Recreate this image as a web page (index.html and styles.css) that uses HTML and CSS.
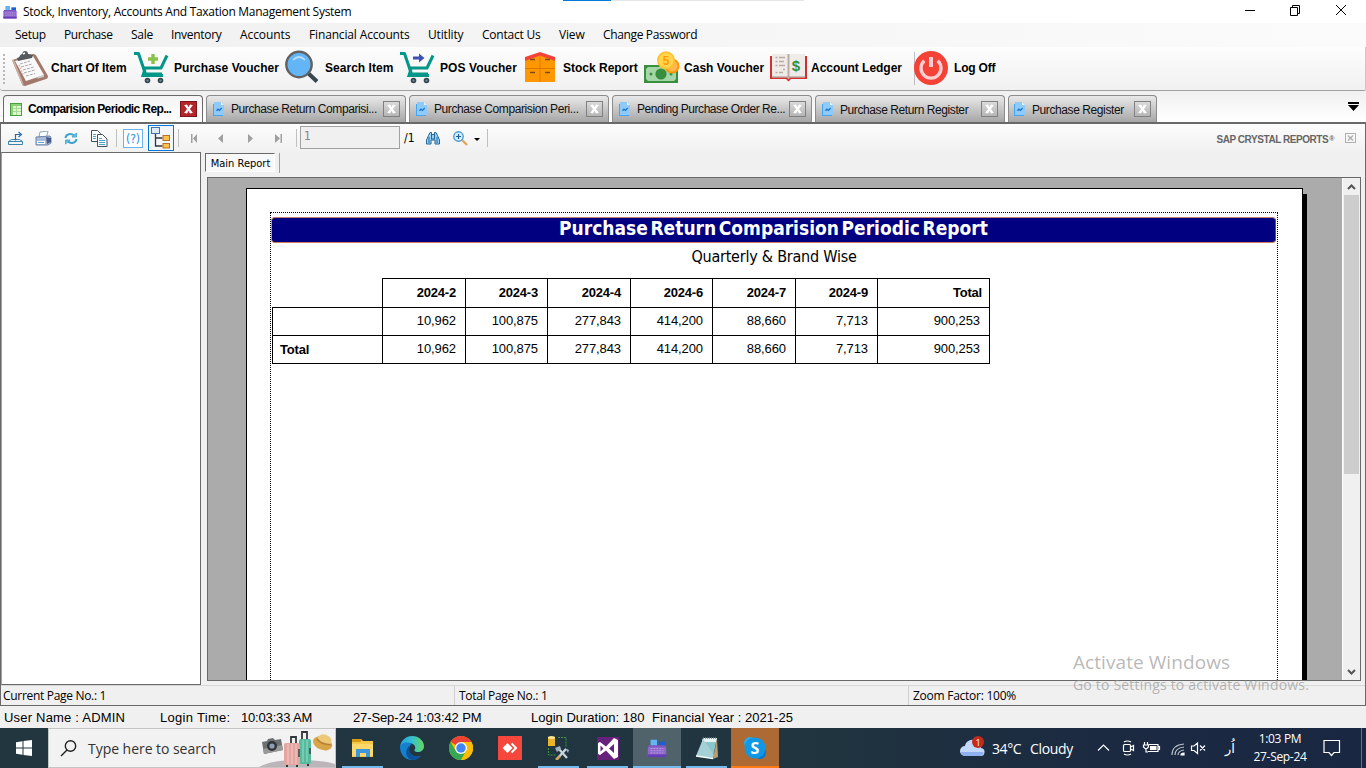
FILE: index.html
```html
<!DOCTYPE html>
<html lang="en">
<head>
<meta charset="utf-8">
<title>Stock, Inventory, Accounts And Taxation Management System</title>
<link rel="stylesheet" href="styles.css">
</head>
<body>
<svg class="defs" aria-hidden="true">
  <symbol id="app" viewBox="0 0 24 24">
    <path d="M5 3h7v7H5z" fill="#64b5f6"/><path d="M14 5h7v4h-7z" fill="#1a5fd8"/>
    <path d="M3 9h18l1 3H2z" fill="#7e57c2"/><rect x="2" y="11" width="20" height="10" fill="#9166cf"/>
    <path d="M2 19h20v3H2z" fill="#673ab7"/><path d="M5 12.500h14M5 15h14M5 17.500h14" stroke="#b39ddb" stroke-width="1.100" stroke-dasharray="2 1.200"/>
  </symbol>
  <symbol id="cart" viewBox="0 0 36 34">
    <path d="M1 2.500h4.500l7 20.500h16.500" fill="none" stroke="#009688" stroke-width="3" stroke-linejoin="round"/>
    <path d="M9.500 17h18.500l6-12.500" fill="none" stroke="#009688" stroke-width="3"/>
    <path d="M12 18l-2 6.500h20" fill="none" stroke="#009688" stroke-width="3"/>
    <circle cx="14.500" cy="29.500" r="2.800" fill="#37474f"/><circle cx="27.500" cy="29.500" r="2.800" fill="#37474f"/>
    <circle cx="14.500" cy="29.500" r="1.100" fill="#78909c"/><circle cx="27.500" cy="29.500" r="1.100" fill="#78909c"/>
  </symbol>
  <symbol id="doc" viewBox="0 0 12 14">
    <path d="M1 0h7l3 3v10H1z" fill="#90caf9"/><path d="M8 0v3h3z" fill="#e3f2fd"/><path d="M0 2h1v11h9v1H0z" fill="#42a5f5"/>
    <path d="M3.500 8.800l1.500-1.600 1.500 1.200 2.200-2.400" fill="none" stroke="#1976d2" stroke-width="1.300"/>
  </symbol>
  <symbol id="x" viewBox="0 0 17 16">
    <rect x=".5" y=".5" width="16" height="15" fill="none" stroke="currentColor"/>
    <path d="M5.500 4l6 8M11.500 4l-6 8" stroke="#fff" stroke-width="2.200"/><path d="M4.500 4.500h3M9.500 4.500h3M4.500 11.500h3M9.500 11.500h3" stroke="#fff"/>
  </symbol>
</svg>

<header class="titlebar">
  <svg class="app-icon" width="16" height="16"><use href="#app"/></svg>
  <span class="window-title">Stock, Inventory, Accounts And Taxation Management System</span>
  <i class="top-progress"></i>
  <svg class="win-buttons" width="112" height="20" viewBox="0 0 112 20" fill="none" stroke="#000">
    <path d="M5 8.500h10"/><path d="M50.500 5.500h7v8h-7zM52.500 5.500v-2h7v8h-2"/><path d="M96 3l10 10M106 3l-10 10"/>
  </svg>
</header>

<nav class="menu">
  <span>Setup</span><span>Purchase</span><span>Sale</span><span>Inventory</span><span>Accounts</span><span>Financial Accounts</span><span>Utitlity</span><span>Contact Us</span><span>View</span><span>Change Password</span>
</nav>

<div class="toolbar">
  <i class="grip"></i>
  <div class="tool t-chart"><svg width="38" height="38" viewBox="0 0 38 38">
    <path d="M1 11L22 5c2 0 3 1 4 3l11 19c0 2-1 3-2 3L14 37c-2 0-3-1-3-2z" fill="#a1786a"/>
    <path d="M1 11l10 24 2 2-2-6L3 11z" fill="#c9b3a6"/>
    <path d="M4 12l18-5 11 19-18 6z" fill="#fafafa"/><path d="M33 26l-7 2 1 1-2 1 8-2z" fill="#ccc"/>
    <path d="M9 15l10-3M10 18l11-3M12 21l11-3M13 24l11-3M15 27l9-2.500" stroke="#aaa" stroke-width="1" stroke-dasharray="3 1"/>
    <path d="M8 16l5 11" stroke="#ef9a94" stroke-width="1.200" stroke-dasharray="1.500 1.500"/>
    <path d="M6 9c3 0 2-3 5-4 1-2 1-3 3-3s3 1 3 3c3 0 3 1 5 1l-1 3-14 3z" fill="#555a5d"/><path d="M12 5l2-1" stroke="#fff" stroke-width="1.500"/>
  </svg><b>Chart Of Item</b></div>
  <div class="tool t-purchase"><svg width="36" height="34"><use href="#cart"/><path d="M20 3v10M15 8h10" stroke="#8bc34a" stroke-width="3.400"/></svg><b>Purchase Voucher</b></div>
  <div class="tool t-search"><svg width="35" height="35" viewBox="0 0 35 35"><path d="M23 23l9 8.500" stroke="#37474f" stroke-width="4"/><circle cx="14" cy="14.500" r="12.700" fill="#64b5f6" stroke="#616161" stroke-width="2.400"/><path d="M8 10q6-6 12 0" fill="none" stroke="#bbdefb" stroke-width="1.700"/></svg><b>Search Item</b></div>
  <div class="tool t-pos"><svg width="36" height="34"><use href="#cart"/><path d="M14 7h7" stroke="#3f51b5" stroke-width="3"/><path d="M20 2.500l5.500 4.500-5.500 4.500z" fill="#3f51b5"/></svg><b>POS Voucher</b></div>
  <div class="tool t-stock"><svg width="31" height="31" viewBox="0 0 31 31"><path d="M0 6L15 1l15 5v24H0z" fill="#ff9800"/><path d="M0 9V5L15 0l15 5v4L15 3.500z" fill="#f44336"/><path d="M15 4v26M0 16.500h30" stroke="#e07800"/><path d="M5 7.500h5M20 7.500h5M5 20.500h5M20 20.500h5" stroke="#7a4a20" stroke-width="1.300"/></svg><b>Stock Report</b></div>
  <div class="tool t-cash"><svg width="36" height="33" viewBox="0 0 36 33"><path d="M0 14h34v18H0z" fill="#388e3c"/><path d="M4 16h26l2 2v10l-2 2H4l-2-2V18z" fill="#a5d6a7"/><circle cx="17" cy="23" r="5.600" fill="#388e3c"/><circle cx="7" cy="23" r="1.500" fill="#388e3c"/><circle cx="27" cy="23" r="1.500" fill="#388e3c"/><circle cx="28" cy="15" r="7.500" fill="#ff9800"/><circle cx="28" cy="15" r="5.500" fill="#ffb74d"/><circle cx="22" cy="9.300" r="9" fill="#fdc02f"/><circle cx="22" cy="9.300" r="7.400" fill="#ffd54f"/><text x="22" y="14" class="coin">5</text></svg><b>Cash Voucher</b></div>
  <div class="tool t-ledger"><svg width="37" height="28" viewBox="0 0 37 28"><path d="M0 2h37v23H21l-2.500 2.500L16 25H0z" fill="#d32f2f"/><path d="M2 0h16.500v23H2zM18.500 0H35v23H18.500z" fill="#efebe9"/><path d="M2 23h16l.5 2 .5-2h16" fill="none" stroke="#bcaaa4" stroke-width="1.500"/><path d="M18.500 0v24" stroke="#bcaaa4" stroke-width="2"/><path d="M5.500 3.500h2M9 3.500h6M5.500 7.500h2M9 7.500h5M5.500 11.500h2M9 11.500h6M13 15.500h2M5.500 18.500h2M9 18.500h4" stroke="#bcaaa4" stroke-width="1.300"/><text x="26" y="16.500" class="dollar">$</text></svg><b>Account Ledger</b></div>
  <i class="tool-sep"></i>
  <div class="tool t-logoff"><svg width="34" height="34" viewBox="0 0 34 34"><circle cx="17" cy="17" r="17" fill="#f44336"/><path d="M10.300 9.700a10 10 0 1 0 13.400 0" fill="none" stroke="#ffcdd2" stroke-width="3.400"/><path d="M17 6v10" stroke="#ffcdd2" stroke-width="4"/></svg><b>Log Off</b></div>
</div>

<div class="tabs">
  <div class="tab active w-a"><svg class="sheet" width="12" height="13" viewBox="0 0 12 13"><rect x=".5" y=".5" width="11" height="12" fill="#dff5d0" stroke="#4a9e3d"/><path d="M1 1h10v2H1zM1 1h2v11H1z" fill="#8ed07a"/><path d="M3 5.500h8M3 8.500h8M6.500 3v9" stroke="#a6db95"/></svg><span>Comparision Periodic Rep...</span><svg class="close" width="17" height="16"><use href="#x"/></svg></div>
  <div class="tab w-b"><svg width="12" height="14"><use href="#doc"/></svg><span>Purchase Return Comparisi...</span><svg class="close" width="17" height="16"><use href="#x"/></svg></div>
  <div class="tab w-c"><svg width="12" height="14"><use href="#doc"/></svg><span>Purchase Comparision Peri...</span><svg class="close" width="17" height="16"><use href="#x"/></svg></div>
  <div class="tab w-d"><svg width="12" height="14"><use href="#doc"/></svg><span>Pending Purchase Order Re...</span><svg class="close" width="17" height="16"><use href="#x"/></svg></div>
  <div class="tab low w-e"><svg width="12" height="14"><use href="#doc"/></svg><span>Purchase Return Register</span><svg class="close" width="17" height="16"><use href="#x"/></svg></div>
  <div class="tab low w-f"><svg width="12" height="14"><use href="#doc"/></svg><span>Purchase Register</span><svg class="close" width="17" height="16"><use href="#x"/></svg></div>
  <svg class="tab-list" width="11" height="9" viewBox="0 0 11 9"><path d="M0 0h11v2H0zM0 3h11L5.500 9z"/></svg>
</div>

<main class="viewer">
  <div class="viewer-bar">
    <svg class="i-export" width="18" height="16" viewBox="0 0 18 16" fill="none" stroke="#3d83ae"><path d="M1.500 11.500l3-2h8l3 2v3h-14zM1.500 11.500h14"/><path d="M8.500 10.500v-6h5" stroke="#2d6aa3" stroke-width="1.200"/><path d="M11.500 2l3 2.500-3 2.500" stroke="#2d6aa3" stroke-width="1.200"/></svg>
    <svg class="i-print" width="17" height="15" viewBox="0 0 17 15"><path d="M5 1l8-1-1.500 6H4z" fill="#fff" stroke="#8fa6bd"/><path d="M1 6l14-1 1 2v5l-3 2H1z" fill="#a9bbd6" stroke="#7086ab"/><path d="M11 6l5 1v4l-4 2z" fill="#465c8e"/><path d="M2 10h8v3H2z" fill="#fff"/><path d="M3 11.500h6" stroke="#5da0d8"/></svg>
    <svg class="i-refresh" width="14" height="13" viewBox="0 0 14 13" fill="none" stroke="#3fa1cf" stroke-width="2"><path d="M1.500 6C2 2 7 1 10 3.500M12.500 7C12 11 7 12 4 9.500"/><path d="M12.500 1v4H8zM1.500 12V8H6z" fill="#68c3e5" stroke-width=".8"/></svg>
    <svg class="i-copy" width="17" height="17" viewBox="0 0 17 17" fill="#fff" stroke="#42505c"><path d="M.5.500h6l3 3v8h-9z"/><path d="M6.500 4.500h5l4.500 4.500v7.500H6.500z"/><path d="M2 4.500h3M2 6.500h3M2 8.500h3M8 8.500h3M8 10.500h6M8 12.500h6M8 14.500h6" stroke="#4aa3c9"/></svg>
    <i class="sep s1"></i>
    <svg class="i-help" width="20" height="19" viewBox="0 0 20 19"><rect x=".5" y=".5" width="19" height="18" fill="#fff" stroke="#6db4ee"/><text x="10" y="14" class="help">(?)</text></svg>
    <span class="tree-toggle"><svg width="20" height="22" viewBox="0 0 20 22"><path d="M4.500 7v12h7M4.500 11h7" fill="none" stroke="#33373b" stroke-width="1.300"/><rect x=".5" y=".5" width="8" height="6" fill="#dfeaf8" stroke="#486fae"/><rect x="12" y="8.500" width="6.500" height="5" fill="#ffc14a" stroke="#b9702a"/><rect x="12" y="16.500" width="6.500" height="4.500" fill="#ffc14a" stroke="#b9702a"/></svg></span>
    <i class="sep s2"></i>
    <svg class="i-nav" width="94" height="9" viewBox="0 0 94 9" fill="#a0a0a0"><path d="M0 0h1.500v9H0zM6 0v9L2 4.500zM32 0v9l-5-4.500zM57 0v9l5-4.500zM84 0v9l5-4.500zM89.500 0H91v9h-1.500z"/></svg>
    <i class="sep s3"></i>
    <span class="page-input">1</span>
    <span class="page-count">/1</span>
    <svg class="i-find" width="14" height="14" viewBox="0 0 14 14" fill="#9ad0ef" stroke="#23699b"><path d="M2.500 4.500l1.500-3 1.500 0v2h3v-2h1.500l1.500 3 2 4.500v4h-4.500v-4h-4v4H.5v-4z"/><path d="M5.500 3v5h3V3M3 6v6M11 6v6" fill="none"/></svg>
    <svg class="i-zoom" width="15" height="15" viewBox="0 0 15 15"><path d="M9 9l5 5" stroke="#e2a456" stroke-width="2.300"/><circle cx="5.500" cy="5.500" r="4.700" fill="#d6efff" stroke="#4b9ad2" stroke-width="1.400"/><path d="M5.500 3v5M3 5.500h5" stroke="#1d5f9d" stroke-width="1.200"/></svg>
    <svg class="i-drop" width="6" height="3" viewBox="0 0 6 3"><path d="M0 0h6L3 3z"/></svg>
    <i class="sep s4"></i>
    <span class="brand">SAP CRYSTAL REPORTS<sup>®</sup></span>
    <svg class="i-close" width="11" height="10" viewBox="0 0 11 10" fill="none" stroke="#b0b0b0"><rect x=".5" y=".5" width="10" height="9"/><path d="M3 2.500l5 5M8 2.500l-5 5" stroke-width="1.500"/></svg>
  </div>
  <div class="viewer-body">
    <aside class="tree"></aside>
    <section class="report">
      <div class="report-tabs"><span class="main-tab">Main Report</span><i></i></div>
      <div class="canvas">
        <div class="paper-zone"><div class="paper"><div class="margins">
          <h1 class="banner">Purchase Return Comparision Periodic Report</h1>
          <p class="subtitle">Quarterly &amp; Brand Wise</p>
          <div class="crosstab">
            <span class="blank"></span><b>2024-2</b><b>2024-3</b><b>2024-4</b><b>2024-6</b><b>2024-7</b><b>2024-9</b><b class="end">Total</b>
            <span></span><span>10,962</span><span>100,875</span><span>277,843</span><span>414,200</span><span>88,660</span><span>7,713</span><span class="end">900,253</span>
            <b class="row-head last">Total</b><span class="last">10,962</span><span class="last">100,875</span><span class="last">277,843</span><span class="last">414,200</span><span class="last">88,660</span><span class="last">7,713</span><span class="end last">900,253</span>
          </div>
        </div></div></div>
        <div class="scrollbar">
          <svg width="9" height="6" viewBox="0 0 9 6"><path d="M1 5l3.500-3.500L8 5" /></svg>
          <i class="thumb"></i>
          <svg width="9" height="6" viewBox="0 0 9 6"><path d="M1 1l3.500 3.500L8 1"/></svg>
        </div>
      </div>
    </section>
  </div>
  <footer class="viewer-status"><span>Current Page No.: 1</span><span>Total Page No.: 1</span><span>Zoom Factor: 100%</span></footer>
</main>

<footer class="login"><span class="l1">User Name : ADMIN</span><span class="l2">Login Time:</span><span class="l3">10:03:33 AM</span><span class="l4">27-Sep-24 1:03:42 PM</span><span class="l5">Login Duration: 180</span><span class="l6">Financial Year : 2021-25</span></footer>

<div class="taskbar">
  <div class="start"><svg width="16" height="16" viewBox="0 0 16 16" fill="#fff"><path d="M0 2.200L6.500 1.300V7.500H0zM7.500 1.100L16 0v7.500H7.500zM0 8.500h6.500v6.200L0 13.800zM7.500 8.500H16V16l-8.500-1.100z"/></svg></div>
  <div class="search">
    <svg width="17" height="17" viewBox="0 0 17 17" fill="none" stroke="#222" stroke-width="1.400"><circle cx="10.500" cy="6" r="5.200"/><path d="M7 10L1 16"/></svg>
    <span>Type here to search</span>
    <svg class="travel" width="76" height="38" viewBox="0 0 76 38">
      <path d="M0 38q10-6 34-7 30 0 42 4v3z" fill="#bbb4b8"/>
      <path d="M3 13l5-1 1-2 5-1 2 2 6-1 2 11-19 4z" fill="#6d7072"/><path d="M4 20l19-4 1 5-19 4z" fill="#999"/><circle cx="13" cy="17" r="5" fill="#303336"/><circle cx="13" cy="17" r="2.600" fill="#8da0b3"/>
      <path d="M43 12V3h5v9M32 15V8h5v8" fill="none" stroke="#34373b" stroke-width="1.800"/>
      <rect x="40" y="10" width="12" height="25" rx="2" fill="#58b99d"/><path d="M44 11v22M48 11v22" stroke="#8fe1c8"/>
      <rect x="25" y="14" width="16" height="22" rx="2" fill="#e4a4a0"/><path d="M29 15v20M33 15v20M37 15v20" stroke="#f6ccc7"/><path d="M51 19v6M40 20v8" stroke="#3c4648" stroke-width="1.500"/>
      <path d="M27 37h2M37 37h2M48 36h2" stroke="#333" stroke-width="2"/>
      <g transform="rotate(22 63 13)"><ellipse cx="64" cy="14" rx="10" ry="6.500" fill="#d8a548"/><path d="M57 12q1-8 8-7 7 0 7 7-7 4-15 0z" fill="#edc878"/><path d="M57 12q7 4 15 0" fill="none" stroke="#b67d35" stroke-width="1.600"/></g>
    </svg>
  </div>
  <div class="apps">
    <div class="task run"><svg width="24" height="24" viewBox="0 0 24 24"><path d="M1 3h9l2 2h10v16H1z" fill="#f7c948"/><path d="M1 3h9v3H1z" fill="#d99b17"/><path d="M1 8h21v12H1z" fill="#ffd86b"/><path d="M5 21v-8h14v8h-4v-4H9v4z" fill="#3c96dc"/></svg></div>
    <div class="task"><svg width="24" height="24" viewBox="0 0 24 24"><defs><linearGradient id="eg" x1="0" x2="1"><stop offset="0" stop-color="#2b9fe0"/><stop offset=".5" stop-color="#35c1d1"/><stop offset="1" stop-color="#66d85a"/></linearGradient></defs><path d="M0 11C1 4 6 0 12 0c7 0 12 5 12 10 0 4-3 6-6 6-4 0-4-2-3-3 1-2-1-6-6-6-4 0-7 2-9 4z" fill="url(#eg)"/><path d="M0 11c0 7 5 13 12 13 4 0 7-2 9-4-6 2-12-1-12-7 0-3 2-5 3-5-5-3-11-1-12 3z" fill="#1380d0"/><path d="M9 13c0 6 6 9 12 7-2 3-6 4-9 4-6-1-8-9-3-14z" fill="#0c5299"/></svg></div>
    <div class="task"><svg width="24" height="24" viewBox="0 0 24 24"><circle cx="12" cy="12" r="12" fill="#fbbc05"/><path d="M12 12L1.600 6A12 12 0 0 1 22.400 6z" fill="#ea4335"/><path d="M1.600 6A12 12 0 0 0 12 24l5.200-9H6.800z" fill="#34a853"/><path d="M22.400 6H12l5.200 9L12 24A12 12 0 0 0 22.400 6z" fill="#fbbc05"/><circle cx="12" cy="12" r="6" fill="#fff"/><circle cx="12" cy="12" r="4.700" fill="#4285f4"/></svg></div>
    <div class="task"><svg width="24" height="24" viewBox="0 0 24 24"><path d="M0 0h24v24H0z" fill="#f5473b"/><path d="M4.500 12l5-5 5 5-5 5z" fill="#fff"/><path d="M13.500 7.500l4.500 4.500-4.500 4.500" fill="none" stroke="#fff" stroke-width="2"/></svg></div>
    <div class="task run"><svg width="24" height="24" viewBox="0 0 24 24"><path d="M1 1h7v9H1z" fill="#eab429"/><ellipse cx="4.500" cy="1.500" rx="3.500" ry="1.500" fill="#ffe58b"/><path d="M11 1.500h8v9M1.500 12v7H9" fill="none" stroke="#3b9b3b" stroke-dasharray="2 1"/><path d="M10 23L19 13M20 22l-9-10" stroke="#cdd5dc" stroke-width="2.300"/><path d="M8 12l5-2 1 3-4 3zM18 12l4 2-1 3z" fill="#9fb0c0"/><path d="M9 24l4-4" stroke="#d0a65c" stroke-width="2.500"/></svg></div>
    <div class="task run"><svg width="24" height="24" viewBox="0 0 24 24"><path d="M1 1h22v23H1z" fill="#68217a"/><path d="M2 7l2-1 6 4.500L18 2l4 2v17l-4 2-8-8.500L4 19l-2-1z" fill="#fff"/><path d="M4.500 9.500v6l3-3zM13 12.500l5-4.500v9z" fill="#68217a"/></svg></div>
    <div class="task run current"><svg width="22" height="22"><use href="#app"/></svg></div>
    <div class="task run"><svg width="24" height="24" viewBox="0 0 24 24"><path d="M8 2h14l-4 19H3z" fill="#8cc6cd"/><path d="M8 2h14l-1 4H7z" fill="#e5f2f3"/><path d="M8 3L1 20l17 2 1-3z" fill="#a5d0d6"/><path d="M22 2l1 19-5 2z" fill="#b99e75"/><path d="M8 2h14" stroke="#777" stroke-width="1.500" stroke-dasharray="1 1"/><path d="M1 20l17 2.500" stroke="#f3ffff" stroke-width="1.500"/></svg></div>
    <div class="task skype"><svg width="24" height="24" viewBox="0 0 24 24"><circle cx="7" cy="7" r="6" fill="#2aa9e8"/><circle cx="17" cy="17" r="6" fill="#0078d4"/><circle cx="12" cy="12" r="10.500" fill="#0d99e5"/><text x="12" y="18" class="s-logo">S</text></svg></div>
  </div>
  <div class="weather"><svg width="27" height="24" viewBox="0 0 27 24"><path d="M5 20a5 5 0 0 1 0-10A7 7 0 0 1 17 6a6 6 0 0 1 4 6 4 4 0 0 1-1 8z" fill="#c3d9fb"/><path d="M5 20a5 5 0 0 1-4.500-4h23a4 4 0 0 1-3.500 4z" fill="#8fb2ee"/><circle cx="18" cy="6" r="6" fill="#c42b1c"/><text x="18" y="9.500" class="badge">1</text></svg><span class="temp">34°C</span><span class="cond">Cloudy</span></div>
  <svg class="tray" width="112" height="16" viewBox="0 0 112 16" fill="none" stroke="#fff" stroke-width="1.200">
    <path d="M1 10.500l5.500-5.500 5.500 5.500"/>
    <path d="M27 2q3.500-2 7 0M27 14q3.500 2 7 0"/><rect x="26.500" y="4.500" width="7" height="7" rx="1"/><path d="M33.500 7l3-1.500v5l-3-1.500"/>
    <path d="M51.500 4.500h9.500v7h-10M61 6.500h1.500v3H61"/><path d="M53 6h6.500v4H53z" fill="#fff" stroke="none"/><path d="M47.500 2v3M50.500 2v3M46.500 5h5v2l-1.500 1.500h-2L46.500 7zM49 8v4h2"/>
    <path d="M75 15q0-10 12-11M78 15q0-7 9-8M81 15q0-4 6-5" stroke="#b9c0c9"/><path d="M84 15q0-2 3-2v2z" fill="#fff"/>
    <path d="M94.500 6h2.500l3.500-3v10.500l-3.500-3h-2.500zM103 5.500l5 5M108 5.500l-5 5"/>
  </svg>
  <span class="lang">اُر</span>
  <div class="clock"><span>1:03 PM</span><span>27-Sep-24</span></div>
  <svg class="notice" width="18" height="18" viewBox="0 0 18 18" fill="none" stroke="#fff" stroke-width="1.200"><path d="M1 1.500h15.500v12h-5.500l-2.500 3-2.500-3H1z"/></svg>
  <i class="peek"></i>
</div>

<div class="watermark"><p>Activate Windows</p><p>Go to Settings to activate Windows.</p></div>
</body>
</html>
```
FILE: styles.css
```css
* { box-sizing: border-box; }
body { margin: 0; width: 1366px; height: 768px; overflow: hidden; display: flex; flex-direction: column; background: #f0f0f0; color: #000; font: 12px "Open Sans", "Noto Sans", sans-serif; white-space: nowrap; position: relative; }
svg { display: block; flex: none; }
i { flex: none; }
.defs { position: absolute; width: 0; height: 0; }

/* window title */
.titlebar { height: 23px; flex: none; background: #fff; display: flex; align-items: center; position: relative; }
.app-icon { margin: 0 4px 0 2px; }
.window-title { letter-spacing: -.28px; margin-left: 1px; line-height: 22px; padding-top: 1px; }
.top-progress { position: absolute; left: 563px; top: 0; width: 241px; height: 1px; background: linear-gradient(90deg, #0078d7 48px, #e5e5e5 48px); }
.win-buttons { margin-left: auto; margin-right: 14px; }

.menu { height: 24px; flex: none; display: flex; padding-left: 15px; line-height: 24px; background: linear-gradient(90deg, #f0f0f0, #fbfbfb); letter-spacing: -.3px; }
.menu span:nth-child(1) { width: 49px; }
.menu span:nth-child(2) { width: 67px; letter-spacing: -.4px; }
.menu span:nth-child(3) { width: 40px; }
.menu span:nth-child(4) { width: 69px; }
.menu span:nth-child(5) { width: 69px; letter-spacing: -.07px; }
.menu span:nth-child(6) { width: 119px; letter-spacing: -.15px; }
.menu span:nth-child(7) { width: 54px; letter-spacing: -.15px; }
.menu span:nth-child(8) { width: 77px; letter-spacing: -.22px; }
.menu span:nth-child(9) { width: 44px; letter-spacing: -.18px; }
.menu span:nth-child(10) { letter-spacing: -.35px; }

/* main toolbar */
.toolbar { height: 44px; flex: none; display: flex; align-items: center; background: linear-gradient(#fdfdfd, #f1f1f1); border-bottom: 1px solid #a0a0a0; border-right: 1px solid #c8c8c8; font-family: "Liberation Sans", Arial, sans-serif; border-radius: 0 0 2px 3px; }
.grip { width: 2px; height: 30px; margin: 0 6px 0 3px; background: repeating-linear-gradient(#b8b8b8 0 2px, transparent 2px 4px); }
.tool { display: flex; align-items: center; height: 100%; padding-bottom: 2px; flex: none; }
.tool b { letter-spacing: .03px; }
.t-chart { width: 122px; } .t-chart b { margin-left: 2px; letter-spacing: -.03px; }
.t-purchase { width: 152px; } .t-purchase b { margin-left: 5px; }
.t-search { width: 114px; } .t-search b { margin-left: 5px; }
.t-pos { width: 126px; } .t-pos b { margin-left: 5px; letter-spacing: .1px; }
.t-stock { width: 119px; } .t-stock b { margin-left: 7px; letter-spacing: 0; }
.t-cash { width: 126px; } .t-cash b { margin-left: 4px; }
.t-ledger { width: 144px; } .t-ledger b { margin-left: 4px; letter-spacing: -.03px; }
.t-logoff b { margin-left: 6px; letter-spacing: -.2px; }
.tool-sep { width: 1px; height: 33px; background: #bdbdbd; margin-right: -1px; }
.coin { font: bold 12px "Liberation Sans", sans-serif; fill: #ffa000; text-anchor: middle; }
.dollar { font: bold 15px "Liberation Sans", sans-serif; fill: #388e3c; text-anchor: middle; }

/* document tabs */
.tabs { height: 33px; flex: none; display: flex; align-items: flex-end; padding: 0 7px 0 3px; background: linear-gradient(#f0f0f0, #fff); border-bottom: 2px solid #696969; font-family: "Liberation Sans", Arial, sans-serif; }
.tab { height: 27px; display: flex; align-items: center; flex: none; border: 1px solid #8c8c8c; border-bottom: 0; border-radius: 4px 4px 0 0; background: linear-gradient(#e9e9e9, #a6a6a6); padding: 0 5px 0 6px; letter-spacing: -.41px; margin-right: 3px; color: #111; }
.tab span { margin-left: 6px; }
.tab.low span { padding-top: 2px; }
.tab .close { margin-left: auto; color: #808080; }
.tab.active { background: linear-gradient(#f4f4f4, #fff); border-color: #696969; font-weight: 700; letter-spacing: -.62px; color: #000; }
.tab.active .close { background: #b3262b; color: #7d1418; }
.w-a { width: 200px; } .w-b { width: 200px; } .w-c { width: 200px; }
.w-d { width: 200px; letter-spacing: -.45px; padding-right: 5px; } .w-e { width: 190px; padding-right: 6px; } .tab.w-f { width: 149px; padding-left: 5px; }
.tab-list { margin: 0 0 11px auto; }

/* report viewer */
.viewer { height: 582px; flex: none; display: flex; flex-direction: column; border: solid #696969; border-width: 0 1px 1px 1px; font-family: "DejaVu Sans Condensed", Tahoma, sans-serif; font-size: 11px; }
.viewer-bar { height: 28px; flex: none; display: flex; align-items: center; background: linear-gradient(#fcfcfc, #f1f1f1); }
.i-export { margin-left: 6px; } .i-print { margin-left: 10px; } .i-refresh { margin-left: 12px; } .i-copy { margin-left: 13px; }
.sep { width: 1px; height: 18px; background: #c0c0c0; }
.s1 { margin-left: 8px; }
.i-help { margin-left: 6px; }
.help { font: 12px "DejaVu Sans Condensed", sans-serif; fill: #2d8be0; text-anchor: middle; }
.tree-toggle { margin-left: 5px; width: 26px; height: 26px; border: 1px solid #0078d7; background: #f2f6fa; display: flex; align-items: center; justify-content: center; flex: none; }
.s2 { margin-left: 4px; } .i-nav { margin-left: 12px; } .s3 { margin-left: 11px; }
.page-input { margin-left: 3px; width: 100px; height: 23px; border: 1px solid #a0a0a0; background: #f0f0f0; color: #8d8088; padding: 0 3px; font-size: 12px; line-height: 18px; flex: none; margin-bottom: 1px; }
.page-count { margin-left: 4px; width: 22px; font-size: 12px; }
.i-zoom { margin-left: 13px; } .i-drop { margin: 3px 0 0 6px; } .s4 { margin-left: 7px; }
.brand { margin-left: auto; font: bold 10px "Liberation Sans", Arial, sans-serif; letter-spacing: -.44px; color: #666; padding-top: 2px; }
.brand sup { font-size: 7px; line-height: 0; vertical-align: 2px; margin-left: 1px; }
.i-close { margin: 0 9px 0 11px; }

.viewer-body { height: 533px; flex: none; display: flex; }
.tree { width: 200px; background: #fff; border: 1px solid #696969; border-left-color: #a0a0a0; flex: none; }
.report { flex: 1; display: flex; flex-direction: column; padding: 1px 4px 4px 5px; }
.report-tabs { height: 24px; flex: none; display: flex; align-items: flex-start; }
.report-tabs i { width: 1px; height: 20px; background: #a0a0a0; margin-left: 4px; }
.main-tab { width: 70px; height: 19px; border: 1px solid #fff; border-top-color: #696969; border-left-color: #696969; background: #f8f8f8; text-align: center; line-height: 19px; }
.main-tab { margin-left: -1px; padding-left: 1px; }
.report-tabs i { margin-left: 4px; }
.canvas { flex: 1; min-height: 0; display: flex; border: 1px solid #696969; background: #ababab; margin-left: 1px; }
.paper-zone { flex: 1; padding: 10px 36px 0 38px; overflow: hidden; }
.paper { width: 1057px; height: 700px; border: 1px solid #000; background: #fff; padding: 23px 24px 0 23px; box-shadow: 4px 6px 0 #000; }
.margins { width: 1008px; height: 640px; border: 1px dotted #000; padding: 4px 1px 0 0; }
.banner { margin: 0; width: 1005px; height: 26px; background: #000080; border: 1px solid; border-color: #c07a70 #8c3c60 #d07c5c #ee8a38; border-radius: 4px; color: #fff; text-align: center; font: bold 19px/21px "DejaVu Sans Condensed", Tahoma, sans-serif; word-spacing: -3.300px; }
.subtitle { margin: 0; height: 35px; text-align: center; font: 16px/27px "DejaVu Sans Condensed", Tahoma, sans-serif; letter-spacing: -.23px; padding-left: 1px; }
.crosstab { display: grid; width: 718px; margin-left: 1px; grid-template-columns: 110px 83px 82px 83px 82px 83px 82px 113px; grid-template-rows: 29px 28px 29px; font: 13px "Liberation Sans", Arial, sans-serif; text-align: right; line-height: 26px; letter-spacing: -.1px; }
.crosstab > * { border: solid #000; border-width: 1px 0 0 1px; padding-right: 9px; }
.crosstab b { padding-right: 9px; letter-spacing: -.2px; line-height: 27px; }
.crosstab .blank { border: 0; }
.crosstab .end { border-right-width: 1px; }
.crosstab b.end { padding-right: 7px; }
.crosstab .last { border-bottom-width: 1px; }
.crosstab .row-head { text-align: left; padding-left: 7px; }
.scrollbar { width: 17px; background: #f0f0f0; display: flex; flex-direction: column; align-items: center; padding: 6px 0 5px; border-left: 1px solid #fff; margin-left: -1px; }
.scrollbar path { fill: none; stroke: #555; stroke-width: 2; }
.scrollbar { width: 18px; }
.thumb { width: 15px; height: 279px; margin: 5px 0 auto; background: #cdcdcd; }

.viewer-status { height: 20px; flex: none; display: flex; border-top: 1px solid #d7d7d7; font: 12px/20px "Open Sans", sans-serif; letter-spacing: -.31px; }
.viewer-status span { width: 453px; padding-left: 2px; }
.viewer-status span:nth-child(n+2) { border-left: 1px solid #d0d0d0; padding-left: 4px; width: 454px; }
.viewer-status span:nth-child(3) { letter-spacing: -.26px; }

.login { height: 22px; flex: none; display: flex; font: 13px/23px "Liberation Sans", Arial, sans-serif; padding-left: 4px; }
.login .l1 { width: 156px; letter-spacing: .2px; }
.login .l2 { width: 81px; letter-spacing: .3px; }
.login .l3 { width: 112px; letter-spacing: -.17px; }
.login .l4 { width: 178px; letter-spacing: -.12px; }
.login .l5 { width: 121px; }
.login .l6 { letter-spacing: .03px; }

/* desktop taskbar */
.taskbar { height: 40px; flex: none; display: flex; background: linear-gradient(90deg, #21363f 0, #20353f 58%, #1b2941 82%, #1a2742); color: #fff; align-items: center; }
.start { width: 48px; display: flex; justify-content: center; }
.search { width: 288px; height: 40px; background: #f2f2f2; border: 1px solid #c5c5c5; display: flex; align-items: center; padding-left: 11px; color: #333; font-size: 14px; flex: none; }
.search span { margin-left: 11px; letter-spacing: -.04px; }
.travel { margin-left: auto; }
.apps { display: flex; margin-left: 2px; }
.task { width: 49px; height: 40px; display: flex; align-items: center; justify-content: center; border: solid transparent; border-width: 0 4px; background-clip: padding-box; }
.task.run { box-shadow: inset 0 -2px #76b9ed; }
.task.current { background-color: #50636b; border-width: 0; width: 48px; margin: 0 1px; }
.task.skype { width: 48px; border-width: 0; background: #ad6a35; box-shadow: inset 0 -2px #ff7b13; }
.s-logo { font: bold 16px "Open Sans", sans-serif; fill: #fff; text-anchor: middle; }
.weather { display: flex; align-items: center; margin-left: 181px; font-size: 14px; }
.temp { margin-left: 5px; width: 38px; letter-spacing: -.4px; }
.cond { width: 54px; letter-spacing: -.33px; }
.badge { font: 9px "Open Sans", sans-serif; fill: #fff; text-anchor: middle; }
.tray { margin-left: 13px; }
.lang { margin-left: 16px; width: 12px; font: 13px "DejaVu Sans", sans-serif; }
.clock { margin-left: 16px; width: 54px; display: flex; flex-direction: column; align-items: center; line-height: 18px; letter-spacing: -.32px; }
.notice { margin-left: 16px; }
.peek { margin-left: auto; margin-right: 4px; width: 1px; height: 40px; background: #66717f; }

.watermark { position: absolute; left: 1073px; top: 648px; color: rgba(140, 140, 140, .62); }
.watermark p { margin: 0; font-size: 19px; line-height: 28px; letter-spacing: .07px; }
.watermark p + p { font-size: 14px; line-height: 18px; letter-spacing: .19px; }
```
